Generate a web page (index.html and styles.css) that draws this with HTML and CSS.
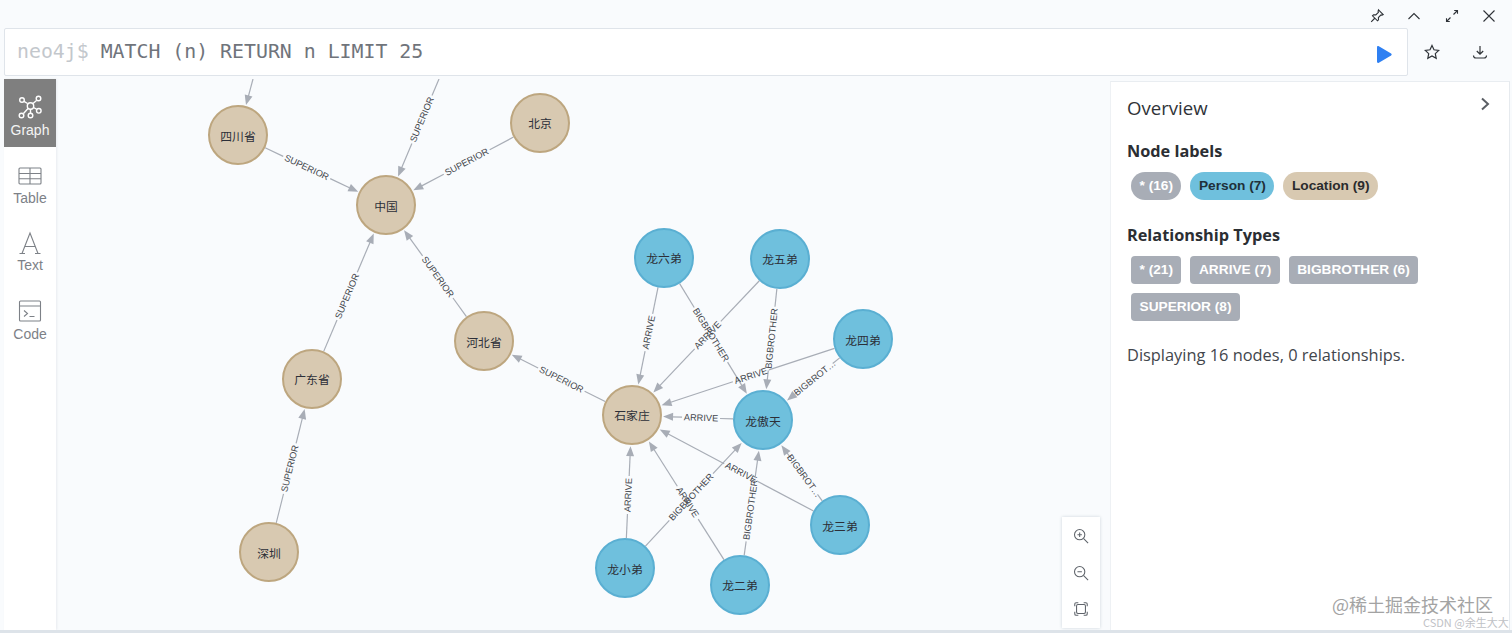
FILE: index.html
```html
<!DOCTYPE html>
<html lang="en">
<head>
<meta charset="utf-8">
<title>Neo4j Browser</title>
<link rel="stylesheet" href="styles.css">
</head>
<body>
<div class="frame">
  <div class="topbar">
    <svg class="icon" viewBox="0 0 16 16"><path d="M9.5 1.8l4.7 4.7-1.2.6-1-.2-2.6 2.6.1 2.3-1 1-5-5 1-1 2.300.1L9.400 4.300l-.3-1.100zM5.500 10.500L2.200 13.800"/></svg>
    <svg class="icon" viewBox="0 0 16 16"><path d="M2.500 11L8 5.500l5.500 5.500"/></svg>
    <svg class="icon" viewBox="0 0 16 16"><path d="M9.500 6.500L13.500 2.500M10.200 2.500h3.300v3.300M6.500 9.500L2.500 13.500M2.500 10.200v3.300h3.300"/></svg>
    <svg class="icon" viewBox="0 0 16 16"><path d="M2.500 2.500l11 11M13.500 2.500l-11 11"/></svg>
  </div>
  <div class="editor-row">
    <div class="editor">
      <div class="query"><span class="prompt">neo4j$</span> MATCH (n) RETURN n LIMIT 25</div>
      <svg class="run" viewBox="2 1 13 16" preserveAspectRatio="none"><path d="M2 2.200v13.600c0 1 .8 1.400 1.600.9l10.600-6.800c.7-.5.7-1.300 0-1.800L3.600 1.300C2.800.8 2 1.200 2 2.200z"/></svg>
    </div>
    <div class="editor-actions">
      <svg class="action" viewBox="0 0 16 16"><path d="M8 1.500l2 4.300 4.700.6-3.400 3.200.9 4.700L8 12l-4.200 2.300.9-4.700L1.300 6.400 6 5.800z"/></svg>
      <svg class="action" viewBox="0 0 16 16"><path d="M8 2v8M4.800 7L8 10.200 11.200 7M1.500 11.500c0 1.500 1 2.500 2.500 2.500h8c1.500 0 2.500-1 2.500-2.500"/></svg>
    </div>
  </div>
  <div class="main">
    <nav class="sidebar">
      <div class="nav-item nav-active">
        <svg class="nav-icon" viewBox="0 0 24 24"><path d="M9.500 8.500L6 6.300M15 8.500l3.500-3M15.500 12.500l3 1.700M12.500 14v4M10 13.500l-4.500 5"/><circle cx="12.500" cy="11" r="3.200"/><circle cx="4" cy="5" r="2.300"/><circle cx="20.500" cy="3.500" r="2.300"/><circle cx="20.800" cy="15.800" r="2.300"/><circle cx="12.500" cy="20.500" r="2.300"/><circle cx="3.500" cy="20.500" r="2.300"/></svg>
        <span>Graph</span>
      </div>
      <div class="nav-item">
        <svg class="nav-icon" viewBox="0 0 24 24"><rect x="1" y="5" width="22" height="16" rx="1"/><path d="M1 10.500h22M1 15.800h22M12 5v16"/></svg>
        <span>Table</span>
      </div>
      <div class="nav-item">
        <svg class="nav-icon" viewBox="0 0 24 24"><path d="M4 23.500L12 3l8 20.500M7 16.500h10M1.500 23.500h5.500M17 23.500h5.500"/></svg>
        <span>Text</span>
      </div>
      <div class="nav-item nav-code">
        <svg class="nav-icon" viewBox="0 0 24 24"><rect x="1.500" y="3" width="21" height="20" rx="1"/><path d="M1.500 8h21M6 12.500l3.500 3-3.500 3M11.500 18.500h5"/></svg>
        <span>Code</span>
      </div>
    </nav>

    <div class="canvas">
      <svg class="graph" viewBox="57 79 1051 551" width="1051" height="551">
        <g class="edge" transform="translate(238 135) rotate(25.3)">
          <line x1="30" x2="50" y1="0" y2="0"/><line x1="102" x2="125" y1="0" y2="0"/><polygon points="133,0 123,-4 123,4"/>
          <text x="76" y="3">SUPERIOR</text>
        </g>
        <g class="edge" transform="translate(540 123) rotate(152)">
          <line x1="30" x2="57" y1="0" y2="0"/><line x1="109" x2="135" y1="0" y2="0"/><polygon points="143.500,0 133.500,-4 133.500,4"/>
          <text transform="translate(83 0) rotate(180)" y="3">SUPERIOR</text>
        </g>
        <g class="edge" transform="translate(439 79) rotate(112.8)">
          <line x1="0" x2="18" y1="0" y2="0"/><line x1="70" x2="98" y1="0" y2="0"/><polygon points="105.700,0 95.700,-4 95.700,4"/>
          <text transform="translate(44 0) rotate(180)" y="3">SUPERIOR</text>
        </g>
        <g class="edge" transform="translate(253 79) rotate(105)">
          <line x1="0" x2="19" y1="0" y2="0"/><polygon points="27,0 17,-4 17,4"/>
        </g>
        <g class="edge" transform="translate(312 379) rotate(-67)">
          <line x1="30" x2="64" y1="0" y2="0"/><line x1="116" x2="150" y1="0" y2="0"/><polygon points="158,0 148,-4 148,4"/>
          <text x="90" y="3">SUPERIOR</text>
        </g>
        <g class="edge" transform="translate(484 341) rotate(-125.800)">
          <line x1="30" x2="53" y1="0" y2="0"/><line x1="105" x2="129" y1="0" y2="0"/><polygon points="136.600,0 126.600,-4 126.600,4"/>
          <text transform="translate(79 0) rotate(180)" y="3">SUPERIOR</text>
        </g>
        <g class="edge" transform="translate(269 552) rotate(-76)">
          <line x1="30" x2="60" y1="0" y2="0"/><line x1="112" x2="139" y1="0" y2="0"/><polygon points="147.300,0 137.300,-4 137.300,4"/>
          <text x="86" y="3">SUPERIOR</text>
        </g>
        <g class="edge" transform="translate(632 415) rotate(-153.400)">
          <line x1="30" x2="53" y1="0" y2="0"/><line x1="105" x2="126" y1="0" y2="0"/><polygon points="134.500,0 124.500,-4 124.500,4"/>
          <text transform="translate(79 0) rotate(180)" y="3">SUPERIOR</text>
        </g>
        <g class="edge" transform="translate(664 258) rotate(101.500)">
          <line x1="30" x2="57" y1="0" y2="0"/><line x1="95" x2="121" y1="0" y2="0"/><polygon points="129,0 119,-4 119,4"/>
          <text transform="translate(76 0) rotate(180)" y="3">ARRIVE</text>
        </g>
        <g class="edge" transform="translate(664 258) rotate(58.600)">
          <line x1="30" x2="58" y1="0" y2="0"/><line x1="122" x2="151" y1="0" y2="0"/><polygon points="159,0 149,-4 149,4"/>
          <text x="90" y="3">BIGBROTHER</text>
        </g>
        <g class="edge" transform="translate(780 259) rotate(133.500)">
          <line x1="30" x2="86" y1="0" y2="0"/><line x1="124" x2="176" y1="0" y2="0"/><polygon points="184,0 174,-4 174,4"/>
          <text transform="translate(105 0) rotate(180)" y="3">ARRIVE</text>
        </g>
        <g class="edge" transform="translate(780 259) rotate(96)">
          <line x1="30" x2="48" y1="0" y2="0"/><line x1="112" x2="123" y1="0" y2="0"/><polygon points="131,0 121,-4 121,4"/>
          <text transform="translate(80 0) rotate(180)" y="3">BIGBROTHER</text>
        </g>
        <g class="edge" transform="translate(863 339) rotate(161.800)">
          <line x1="30" x2="99" y1="0" y2="0"/><line x1="137" x2="204" y1="0" y2="0"/><polygon points="212,0 202,-4 202,4"/>
          <text transform="translate(118 0) rotate(180)" y="3">ARRIVE</text>
        </g>
        <g class="edge" transform="translate(863 339) rotate(141)">
          <line x1="30" x2="39" y1="0" y2="0"/><line x1="85" x2="90" y1="0" y2="0"/><polygon points="97.700,0 87.700,-4 87.700,4"/>
          <text transform="translate(62 0) rotate(180)" y="3">BIGBROT…</text>
        </g>
        <g class="edge" transform="translate(763 420) rotate(182)">
          <line x1="30" x2="43" y1="0" y2="0"/><line x1="81" x2="92" y1="0" y2="0"/><polygon points="100,0 90,-4 90,4"/>
          <text transform="translate(62 0) rotate(180)" y="3">ARRIVE</text>
        </g>
        <g class="edge" transform="translate(840 525) rotate(-152.100)">
          <line x1="30" x2="93" y1="0" y2="0"/><line x1="131" x2="196" y1="0" y2="0"/><polygon points="204,0 194,-4 194,4"/>
          <text transform="translate(112 0) rotate(180)" y="3">ARRIVE</text>
        </g>
        <g class="edge" transform="translate(840 525) rotate(-126.300)">
          <line x1="30" x2="38" y1="0" y2="0"/><line x1="84" x2="91" y1="0" y2="0"/><polygon points="99,0 89,-4 89,4"/>
          <text transform="translate(61 0) rotate(180)" y="3">BIGBROT…</text>
        </g>
        <g class="edge" transform="translate(625 568) rotate(-87.400)">
          <line x1="30" x2="54" y1="0" y2="0"/><line x1="92" x2="114" y1="0" y2="0"/><polygon points="122,0 112,-4 112,4"/>
          <text x="73" y="3">ARRIVE</text>
        </g>
        <g class="edge" transform="translate(625 568) rotate(-47)">
          <line x1="30" x2="65" y1="0" y2="0"/><line x1="129" x2="163" y1="0" y2="0"/><polygon points="171,0 161,-4 161,4"/>
          <text x="97" y="3">BIGBROTHER</text>
        </g>
        <g class="edge" transform="translate(740 585) rotate(-122.400)">
          <line x1="30" x2="78" y1="0" y2="0"/><line x1="117" x2="162" y1="0" y2="0"/><polygon points="170,0 160,-4 160,4"/>
          <text transform="translate(98 0) rotate(180)" y="3">ARRIVE</text>
        </g>
        <g class="edge" transform="translate(740 585) rotate(-82)">
          <line x1="30" x2="44" y1="0" y2="0"/><line x1="108" x2="128" y1="0" y2="0"/><polygon points="135.600,0 125.600,-4 125.600,4"/>
          <text x="76" y="3">BIGBROTHER</text>
        </g>

        <g class="node node-location">
          <circle cx="238" cy="135" r="29"/><text x="238" y="141">四川省</text>
          <circle cx="540" cy="123" r="29"/><text x="540" y="128">北京</text>
          <circle cx="386" cy="205" r="29"/><text x="386" y="211">中国</text>
          <circle cx="312" cy="379" r="29"/><text x="312" y="384">广东省</text>
          <circle cx="484" cy="341" r="29"/><text x="484" y="347">河北省</text>
          <circle cx="269" cy="552" r="29"/><text x="269" y="558">深圳</text>
          <circle cx="632" cy="415" r="29"/><text x="632" y="420">石家庄</text>
        </g>
        <g class="node node-person">
          <circle cx="664" cy="258" r="29"/><text x="664" y="263">龙六弟</text>
          <circle cx="780" cy="259" r="29"/><text x="780" y="264">龙五弟</text>
          <circle cx="863" cy="339" r="29"/><text x="863" y="345">龙四弟</text>
          <circle cx="763" cy="420" r="29"/><text x="763" y="426">龙傲天</text>
          <circle cx="840" cy="525" r="29"/><text x="840" y="531">龙三弟</text>
          <circle cx="625" cy="568" r="29"/><text x="625" y="574">龙小弟</text>
          <circle cx="740" cy="585" r="29"/><text x="740" y="590">龙二弟</text>
        </g>
      </svg>
      <div class="zoom-tools">
        <svg class="zoom-icon" viewBox="0 0 18 18"><circle cx="7.500" cy="7.500" r="5.800"/><path d="M12 12l5 5M5 7.500h5M7.500 5v5"/></svg>
        <svg class="zoom-icon" viewBox="0 0 18 18"><circle cx="7.500" cy="7.500" r="5.800"/><path d="M12 12l5 5M5 7.500h5"/></svg>
        <svg class="zoom-icon" viewBox="0 0 18 18"><rect x="4" y="4" width="10" height="10" rx="1.500"/><path d="M2 6V3.500C2 2.500 2.500 2 3.500 2H6M12 2h2.500c1 0 1.500.5 1.500 1.500V6M16 12v2.500c0 1-.5 1.500-1.500 1.500H12M6 16H3.500C2.500 16 2 15.500 2 14.500V12"/></svg>
      </div>
    </div>

    <aside class="panel">
      <div class="panel-head">
        <h2 class="panel-title">Overview</h2>
        <svg class="panel-toggle" viewBox="0 0 12 14"><path d="M3 1.500L9 7l-6 5.500"/></svg>
      </div>
      <h3 class="section-title">Node labels</h3>
      <div class="tags">
        <span class="tag tag-pill tag-grey">* (16)</span>
        <span class="tag tag-pill tag-person">Person (7)</span>
        <span class="tag tag-pill tag-location">Location (9)</span>
      </div>
      <h3 class="section-title section-rel">Relationship Types</h3>
      <div class="tags">
        <span class="tag tag-grey">* (21)</span>
        <span class="tag tag-grey">ARRIVE (7)</span>
        <span class="tag tag-grey">BIGBROTHER (6)</span>
        <span class="tag tag-grey">SUPERIOR (8)</span>
      </div>
      <p class="status">Displaying 16 nodes, 0 relationships.</p>
    </aside>
  </div>
  <div class="watermark">@稀土掘金技术社区</div>
  <div class="credit">CSDN @余生大大</div>
</div>
</body>
</html>
```
FILE: styles.css
```css
* { box-sizing: border-box; }
html, body { margin: 0; padding: 0; }
body { background: #f9fbfd; overflow: hidden; }
.frame {
  position: relative;
  width: 1512px;
  height: 633px;
  display: flex;
  flex-direction: column;
  border-bottom: 3px solid #dde3e9;
  background: #f9fbfd;
  overflow: hidden;
}
.topbar {
  height: 28px;
  flex: none;
  display: flex;
  justify-content: flex-end;
  align-items: center;
  gap: 21.500px;
  padding: 4px 15px 0 0;
}
.icon { width: 16px; height: 16px; fill: none; stroke: #2f3338; stroke-width: 1.100; }
.editor-row { height: 48px; flex: none; display: flex; padding-left: 4px; }
.editor {
  width: 1404px;
  height: 48px;
  background: #fff;
  border: 1px solid #dfe4ea;
  border-radius: 2px;
  display: flex;
  align-items: center;
  justify-content: space-between;
  padding: 0 15px 0 12px;
}
.query {
  font: 19.850px/1 "DejaVu Sans Mono", monospace;
  color: #70747b;
  white-space: pre;
}
.prompt { color: #c3c7cc; }
.run { width: 15px; height: 17px; fill: #2f80f2; margin-top: 5px; }
.editor-actions { flex: 1; display: flex; align-items: center; gap: 32px; padding-left: 16px; }
.action { width: 16px; height: 16px; fill: none; stroke: #2f3338; stroke-width: 1.200; }
.main { flex: 1; min-height: 0; display: flex; margin-top: 3px; }
.sidebar {
  width: 52px;
  margin-left: 4px;
  flex: none;
  background: #fff;
  box-shadow: 1px 0 2px rgba(120, 135, 150, .12);
}
.nav-item {
  height: 67.500px;
  padding-top: 16px;
  display: flex;
  flex-direction: column;
  align-items: center;
  gap: 3px;
  color: #7d8187;
  font: 14px/16px "Liberation Sans", sans-serif;
}
.nav-code { gap: 4px; }
.nav-active { background: #7f7f7f; color: #f4f4f4; }
.nav-icon { width: 24px; height: 24px; fill: none; stroke: #7d8187; stroke-width: 1.100; }
.nav-active .nav-icon { stroke: #fff; stroke-width: 1.400; }
.canvas { position: relative; width: 1052px; flex: none; }
.graph { display: block; margin-left: 1px; }
.edge line { stroke: #a8adb6; stroke-width: 1.200; }
.edge polygon { fill: #a8adb6; }
.edge text {
  font: 9.200px "Liberation Sans", sans-serif;
  fill: #44474d;
  text-anchor: middle;
  text-rendering: geometricPrecision;
}
.node circle { stroke-width: 2; }
.node text {
  font: 11.800px "Noto Sans CJK SC", sans-serif;
  fill: #2c2f38;
  text-anchor: middle;
}
.node-location circle { fill: #d8c9b1; stroke: #bda67f; }
.node-person circle { fill: #6fc0dd; stroke: #5aafd2; }
.zoom-tools {
  position: absolute;
  left: 1006px;
  top: 438px;
  width: 38px;
  height: 111px;
  background: #fff;
  box-shadow: 0 0 3px rgba(110, 125, 140, .3);
  display: flex;
  flex-direction: column;
  align-items: center;
  gap: 20.500px;
  padding-top: 11px;
}
.zoom-icon { width: 16px; height: 16px; fill: none; stroke: #5f646b; stroke-width: 1.200; }
.panel {
  width: 400px;
  flex: none;
  margin: 2px 0 0 2px;
  background: #fff;
  border-top: 1px solid #e9edf1;
  border-left: 1px solid #eef1f4;
  border-right: 1px solid #e6eaee;
  padding: 0 16px;
  font-family: "Open Sans", sans-serif;
  color: #2f3338;
}
.panel-head { display: flex; justify-content: space-between; align-items: flex-start; padding-top: 13px; }
.panel-title { margin: 0; font-size: 18.600px; line-height: 26px; font-weight: 400; }
.panel-toggle { width: 12px; height: 14px; margin: 2px 2px 0 0; fill: none; stroke: #5a5e64; stroke-width: 2; }
.section-title { margin: 19px 0 0; font-size: 16.300px; line-height: 22px; font-weight: 700; color: #2b2e33; }
.section-rel { margin-top: 24px; }
.tags { display: flex; flex-wrap: wrap; gap: 9px; row-gap: 9px; padding: 10px 0 0 4px; }
.tag {
  height: 28px;
  padding: 0 8.500px;
  border-radius: 4px;
  font: 700 13.700px/28px "Liberation Sans", sans-serif;
}
.tag-pill { border-radius: 14px; }
.tag-grey { background: #a8adb6; color: #fff; }
.tag-person { background: #6fc0dd; color: #20303a; }
.tag-location { background: #d8c9b1; color: #2a2b2d; }
.status { margin: 23px 0 0; font-size: 16.400px; line-height: 22px; color: #42464c; }
.watermark {
  position: absolute;
  left: 1332px;
  top: 592px;
  font: 18px/24px "Noto Sans CJK SC", sans-serif;
  color: #a3a3a3;
}
.credit {
  position: absolute;
  left: 1423px;
  top: 615px;
  font: 11px/14px "Noto Sans CJK SC", sans-serif;
  color: #bfc2c6;
}
```
